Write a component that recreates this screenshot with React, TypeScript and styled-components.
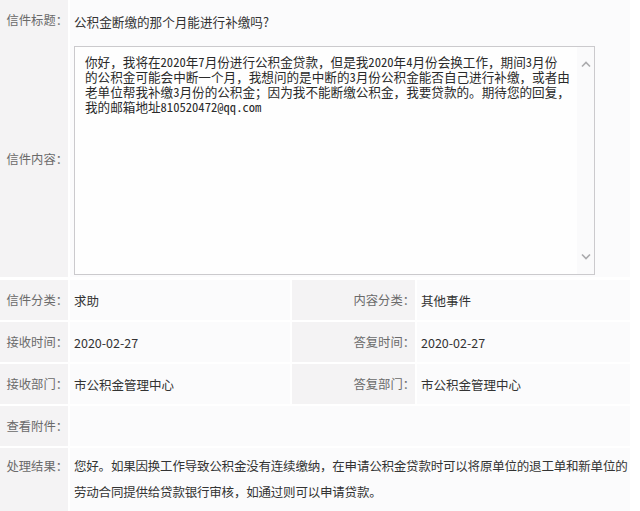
import React from "react";
import styled, { createGlobalStyle } from "styled-components";

const Global = createGlobalStyle`
  html, body { margin: 0; padding: 0; background: #ffffff; }
  body { font-family: "Noto Sans CJK SC", "Noto Sans", sans-serif; }
`;

const Page = styled.div`
  width: 630px;
  display: flex;
  flex-direction: column;
  background: #ffffff;
`;

const Block = styled.div`
  display: grid;
  grid-template-columns: 68px 1fr;
  column-gap: 2px;
`;

const Grid = styled.div`
  display: grid;
  grid-template-columns: 68px 220px 123px 1fr;
  grid-auto-rows: 40px;
  gap: 2px;
  margin-top: 3px;
`;

const Label = styled.div<{ $top?: number }>`
  background: #f4f3f4;
  color: #6a6a6a;
  font-size: 12.3px;
  text-align: right;
  display: flex;
  align-items: ${(p) => (p.$top !== undefined ? "flex-start" : "center")};
  justify-content: flex-end;
  padding-top: ${(p) => (p.$top !== undefined ? `${p.$top}px` : "0")};
  line-height: 26px;
  white-space: nowrap;
`;

const Value = styled.div<{ $span?: number; $top?: number }>`
  background: #fbfbfc;
  color: #333;
  font-size: 12.5px;
  display: flex;
  align-items: ${(p) => (p.$top !== undefined ? "flex-start" : "center")};
  padding: ${(p) => (p.$top !== undefined ? `${p.$top}px 0 0 4px` : "1px 4px 0")};
  grid-column: ${(p) => (p.$span ? `span ${p.$span}` : "auto")};
  line-height: 26px;
  box-sizing: border-box;
`;

const TitleValue = styled(Value)`
  height: 40px;
  padding-top: 3px;
  font-size: 12.6px;
`;

const ContentValue = styled.div`
  background: #fbfbfc;
  padding: 6px 35px 2px 4px;
`;

const TextBox = styled.div`
  height: 229px;
  box-sizing: border-box;
  border: 1px solid #cbcacd;
  background: #fefefe;
  display: flex;
`;

const TextBody = styled.div`
  flex: 1;
  padding: 7px 0 0 10px;
  font-family: "Noto Sans Mono CJK SC", "Noto Sans CJK SC", "Liberation Mono", monospace;
  font-size: 12.6px;
  line-height: 15px;
  color: #2a2a2a;
  white-space: pre;
  overflow: hidden;
`;

const ScrollTrack = styled.div`
  width: 17px;
  background: #fafafb;
  display: flex;
  flex-direction: column;
  justify-content: space-between;
  align-items: center;
  padding: 14px 0 14px;
`;

const Chevron = ({ up }: { up?: boolean }) => (
  <svg width="10" height="7" viewBox="0 0 10 7">
    <path
      d={up ? "M1 5.5 L5 1.5 L9 5.5" : "M1 1.5 L5 5.5 L9 1.5"}
      fill="none"
      stroke="#aaaaad"
      strokeWidth="1.6"
    />
  </svg>
);

const ResultValue = styled(Value)`
  height: 63px;
  letter-spacing: -0.2px;
`;

const Result = styled.div`
  display: grid;
  grid-template-columns: 68px 1fr;
  column-gap: 2px;
  margin-top: 2px;
`;

const lines = [
  "你好，我将在2020年7月份进行公积金贷款，但是我2020年4月份会换工作，期间3月份",
  "的公积金可能会中断一个月，我想问的是中断的3月份公积金能否自己进行补缴，或者由",
  "老单位帮我补缴3月份的公积金；因为我不能断缴公积金，我要贷款的。期待您的回复，",
  "我的邮箱地址810520472@qq.com",
];

export default function App() {
  return (
    <>
      <Global />
      <Page>
        <Block>
          <Label>信件标题：</Label>
          <TitleValue>公积金断缴的那个月能进行补缴吗?</TitleValue>
          <Label>信件内容：</Label>
          <ContentValue>
            <TextBox>
              <TextBody>{lines.join("\n")}</TextBody>
              <ScrollTrack>
                <Chevron up />
                <Chevron />
              </ScrollTrack>
            </TextBox>
          </ContentValue>
        </Block>
        <Grid>
          <Label>信件分类：</Label>
          <Value>求助</Value>
          <Label>内容分类：</Label>
          <Value>其他事件</Value>
          <Label>接收时间：</Label>
          <Value>2020-02-27</Value>
          <Label>答复时间：</Label>
          <Value>2020-02-27</Value>
          <Label>接收部门：</Label>
          <Value>市公积金管理中心</Value>
          <Label>答复部门：</Label>
          <Value>市公积金管理中心</Value>
          <Label>查看附件：</Label>
          <Value $span={3} />
        </Grid>
        <Result>
          <Label $top={5}>处理结果：</Label>
          <ResultValue $top={5}>
            您好。如果因换工作导致公积金没有连续缴纳，在申请公积金贷款时可以将原单位的退工单和新单位的劳动合同提供给贷款银行审核，如通过则可以申请贷款。
          </ResultValue>
        </Result>
      </Page>
    </>
  );
}
